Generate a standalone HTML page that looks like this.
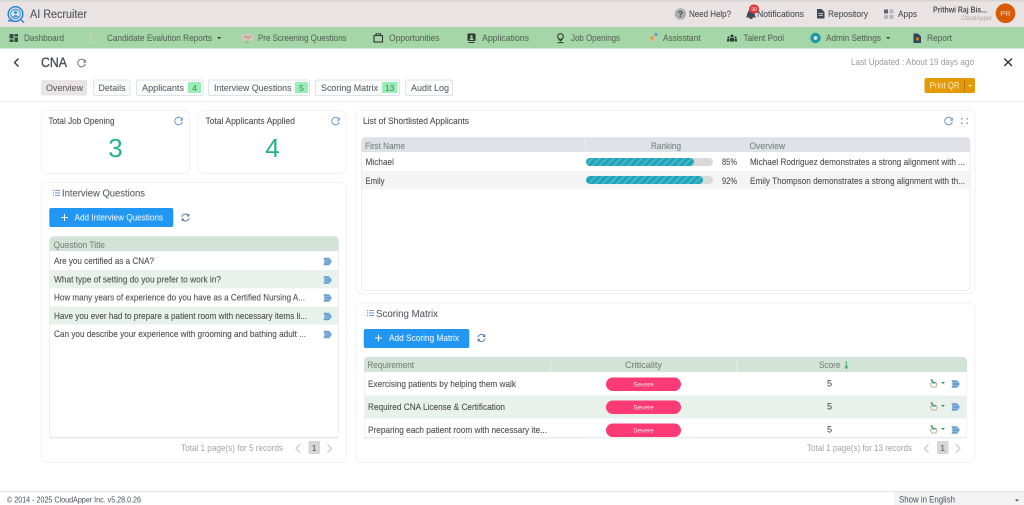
<!DOCTYPE html>
<html lang="en"><head><meta charset="utf-8"><title>AI Recruiter</title>
<style>
html,body{margin:0;padding:0;width:1024px;height:505px;overflow:hidden;background:#fff}
svg{display:block;filter:blur(.3px)}
text{font-family:"Liberation Sans",sans-serif;font-size:9px;fill:#555}
.nav{fill:#5a6a5d;font-size:9.2px;stroke:#5a6a5d;stroke-width:.1}
.top{fill:#4a5058;font-size:9.4px;stroke:#4a5058;stroke-width:.1}
.tab{fill:#5a5f66;font-size:9.4px;stroke:#5a5f66;stroke-width:.08}
.c{fill:#4f4f4f;font-size:9.1px;stroke:#4f4f4f;stroke-width:.1}
.h{fill:#7a827d;font-size:9.1px;stroke:#7a827d;stroke-width:.08}
.t{fill:#5a5f66;font-size:10.2px;stroke:#5a5f66;stroke-width:.1}
.w{fill:#e8f3ff;font-size:9.2px;stroke:#e8f3ff;stroke-width:.08}
.p{fill:#a3a3a3;font-size:9.2px}
</style></head><body>
<svg width="1024" height="505" viewBox="0 0 1024 505" xmlns="http://www.w3.org/2000/svg">
<defs>
<g id="rf"><path d="M3.6-1.4A3.8 3.8 0 1 0 3.8 .8" fill="none" stroke-width=".9"/><path d="M3.9-3.2V-.8H1.6" fill="none" stroke-width=".8"/></g>
<g id="sync" fill="none" stroke="#54799c" stroke-width=".9"><path d="M-3.6-.5A3.7 3.700 0 0 1 3-2"/><path d="M3.6 .5A3.7 3.700 0 0 1-3 2"/><path d="M3.4-3.6V-1.5H1.4M-3.4 3.6V1.500H-1.4"/></g>
<g id="go"><path d="M-4-3.800H1.500L4-.8V.8L1.500 3.800H-4L-3 0Z" fill="#6a9fd2"/><path d="M-3-1.300H2.200M-3 1.300H2.200" stroke="#a9c8e6" stroke-width=".7"/></g>
<g id="hand"><path d="M-1.500-4.500L0-1.200H2.600L3.400 .6 2.600 3.500H-1.600L-3.400 .4-2 -.2" fill="none" stroke="#c5b38e" stroke-width="1"/><path d="M-2.200-4.600L-.3-1.200H2.600L2 0H-1.200L-3-3.800Z" fill="#2f9e8a"/></g>
<g id="ls"><path d="M0-2.400H1M0 0H1M0 2.400H1" stroke="#5b94d8" stroke-width="1.100"/><path d="M2-2.400H7M2 0H7M2 2.400H7" stroke="#5b94d8" stroke-width=".9"/></g>
<g id="plus"><path d="M-3.500 0H3.500M0-3.500V3.500" stroke="#fff" stroke-width="1"/></g>
<pattern id="st" width="5" height="5" patternUnits="userSpaceOnUse" patternTransform="rotate(45)"><rect width="5" height="5" fill="#1fa3b8"/><rect width="2" height="5" fill="#48b6c8"/></pattern>
</defs>

<!-- top bar -->
<rect width="1024" height="1.500" fill="#d6d6d6"/>
<rect y="1.500" width="1024" height="25.500" fill="#e9e3e3"/>
<g fill="none" stroke="#1f7fd6">
<circle cx="15.500" cy="14" r="7.300" stroke-width="1.400"/>
<circle cx="15.500" cy="14" r="4.800" stroke-width=".9"/>
<path d="M21 20L24 22.500M8 20.800H13" stroke-width="1.300"/>
</g>
<circle cx="15.500" cy="12.400" r="1.700" fill="#2aa0e8"/><path d="M12.600 17.400a3 3 0 0 1 5.800 0Z" fill="#2aa0e8"/>
<text x="30" y="18" textLength="57" lengthAdjust="spacingAndGlyphs" style="font-size:11.500px;fill:#4f5661;stroke:#4f5661;stroke-width:.12">AI Recruiter</text>

<circle cx="680.500" cy="14" r="5.600" fill="#a9acb0"/><text x="680.500" y="17" text-anchor="middle" style="font-size:8.500px;font-weight:bold;fill:#3e4650">?</text>
<text class="top" x="689" y="17" textLength="42" lengthAdjust="spacingAndGlyphs">Need Help?</text>
<path d="M746 17.500C747.500 16 747 10 751 9.500 755 10 754.500 16 756 17.500Z" fill="#3f4a57"/><rect x="749.500" y="17.500" width="3" height="1.500" fill="#3f4a57"/>
<rect x="749" y="4.500" width="10" height="9" rx="4.500" fill="#e53535"/><text x="754" y="11" text-anchor="middle" style="font-size:5px;fill:#fff">90</text>
<text class="top" x="757" y="17" textLength="47" lengthAdjust="spacingAndGlyphs">Notifications</text>
<path d="M817 9H821.500L824.500 12V18.500H817Z" fill="#3f4a57"/><path d="M818.500 13.500H823M818.500 15.500H823" stroke="#e9e3e3" stroke-width=".7"/>
<text class="top" x="828" y="17" textLength="40" lengthAdjust="spacingAndGlyphs">Repository</text>
<rect x="884" y="9.500" width="4" height="4" fill="#5d6670"/><rect x="889.500" y="9.500" width="4" height="4" fill="#b3b7bb"/><rect x="884" y="15" width="4" height="4" fill="#b3b7bb"/><rect x="889.500" y="15" width="4" height="4" fill="#b3b7bb"/>
<text class="top" x="898" y="17" textLength="19" lengthAdjust="spacingAndGlyphs">Apps</text>
<text x="933" y="12.500" textLength="54" lengthAdjust="spacingAndGlyphs" style="font-size:8px;font-weight:bold;fill:#4a5058">Prithwi Raj Bis...</text>
<text x="961" y="20" textLength="31" lengthAdjust="spacingAndGlyphs" style="font-size:6.300px;fill:#a8a8a8">CloudApper</text>
<circle cx="1005.500" cy="13.300" r="9.800" fill="#d95a04"/><text x="1005.500" y="16" text-anchor="middle" style="font-size:7.500px;fill:#f3d9c6">PR</text>

<!-- nav -->
<rect y="27" width="1024" height="21.500" fill="#a5d6a7"/>
<g fill="#3c4a44"><rect x="9.500" y="34" width="4" height="4.500"/><rect x="9.500" y="39.500" width="4" height="2.500"/><rect x="14.500" y="34" width="3.500" height="2.500"/><rect x="14.500" y="37.500" width="3.500" height="4.500"/></g>
<text class="nav" x="24" y="41" textLength="40" lengthAdjust="spacingAndGlyphs">Dashboard</text>
<path d="M91 33V42.500H100" fill="none" stroke="#c4d6bc"/><path d="M92.500 41L95 38.500 97 40 99.500 34" fill="none" stroke="#c8c39c" stroke-width=".9"/>
<text class="nav" x="107" y="41" textLength="105" lengthAdjust="spacingAndGlyphs">Candidate Evalution Reports</text>
<path d="M217 37H221.400L219.200 39.200Z" fill="#3f4a44"/>
<rect x="242" y="34" width="11" height="6.500" fill="#d2c9bb"/><path d="M244 38L246 36 248 38.500 251 35.500" fill="none" stroke="#c46a5e" stroke-width=".7"/><path d="M247.500 40.500V42.500M245 42.500H250" stroke="#a6a59a" stroke-width=".7"/>
<text class="nav" x="258" y="41" textLength="88.500" lengthAdjust="spacingAndGlyphs">Pre Screening Questions</text>
<rect x="374" y="35.500" width="8.500" height="6.500" fill="none" stroke="#2e3a33" stroke-width="1.100"/><path d="M376 35.500V33.800H380.500V35.500" fill="none" stroke="#2e3a33"/>
<text class="nav" x="389" y="41" textLength="50.500" lengthAdjust="spacingAndGlyphs">Opportunities</text>
<rect x="467.500" y="33.500" width="8" height="7.500" rx="1" fill="#2e3a33"/><circle cx="471.500" cy="36.500" r="1.300" fill="#a5d6a7"/><path d="M469.500 40a2 2 0 0 1 4 0" fill="#a5d6a7"/><path d="M468.500 42.500H474.500" stroke="#2e3a33"/>
<text class="nav" x="482" y="41" textLength="47" lengthAdjust="spacingAndGlyphs">Applications</text>
<circle cx="560.500" cy="36.500" r="2.800" fill="none" stroke="#2e3a33" stroke-width="1.100"/><path d="M558.700 39L560.500 41 562.300 39M557.500 42.600H563.500" fill="none" stroke="#2e3a33"/>
<text class="nav" x="571" y="41" textLength="49" lengthAdjust="spacingAndGlyphs">Job Openings</text>
<rect x="649" y="35" width="7" height="7" fill="#c9c3b3"/><circle cx="652" cy="38" r="2" fill="#d6a94e"/><circle cx="656" cy="34.500" r="1.600" fill="#5ca0b8"/>
<text class="nav" x="663" y="41" textLength="37.500" lengthAdjust="spacingAndGlyphs">Assisstant</text>
<g fill="#2e3a33"><circle cx="732" cy="36" r="1.500"/><rect x="730" y="38" width="4" height="3.500"/><circle cx="728.500" cy="37.500" r="1.100"/><rect x="727" y="39" width="2.500" height="2.500"/><circle cx="735.500" cy="37.500" r="1.100"/><rect x="734.500" y="39" width="2.500" height="2.500"/></g>
<text class="nav" x="743.500" y="41" textLength="40.500" lengthAdjust="spacingAndGlyphs">Talent Pool</text>
<circle cx="815.500" cy="38" r="5.200" fill="#1c9aa6"/><circle cx="815.500" cy="38" r="1.800" fill="#e3f1f1"/>
<text class="nav" x="826" y="41" textLength="55" lengthAdjust="spacingAndGlyphs">Admin Settings</text>
<path d="M886 37H890.400L888.200 39.200Z" fill="#3f4a44"/>
<path d="M913.500 33.500H918L921 36.500V43H913.500Z" fill="#2d4662"/><rect x="916" y="37.500" width="3" height="3" fill="#d9772e"/>
<text class="nav" x="927" y="41" textLength="25" lengthAdjust="spacingAndGlyphs">Report</text>

<!-- header -->
<path d="M18.500 58.500L14.500 62.500 18.500 66.500" fill="none" stroke="#333" stroke-width="1.300"/>
<text x="41" y="67" textLength="26" lengthAdjust="spacingAndGlyphs" style="font-size:13.500px;fill:#4a4f57;stroke:#4a4f57;stroke-width:.35">CNA</text>
<use href="#rf" x="81.500" y="63" stroke="#666"/>
<text x="851" y="65" textLength="123" lengthAdjust="spacingAndGlyphs" style="font-size:9.200px;fill:#9a9a9a">Last Updated : About 19 days ago</text>
<path d="M1004.300 58.500L1012 66M1012 58.500L1004.300 66" stroke="#333" stroke-width="1.400"/>

<rect x="41" y="80" width="46" height="15.500" rx="1.500" fill="#e9e3e3"/>
<text class="tab" x="46" y="91" textLength="37" lengthAdjust="spacingAndGlyphs">Overview</text>
<g fill="#fbfcfc" stroke="#dce2e6" stroke-width=".9">
<rect x="93.500" y="80" width="36.500" height="15.500" rx="1.500"/>
<rect x="136.500" y="80" width="66.500" height="15.500" rx="1.500"/>
<rect x="208.500" y="80" width="101" height="15.500" rx="1.500"/>
<rect x="315.500" y="80" width="84" height="15.500" rx="1.500"/>
<rect x="405.500" y="80" width="47" height="15.500" rx="1.500"/>
</g>
<text class="tab" x="98.500" y="91" textLength="27" lengthAdjust="spacingAndGlyphs">Details</text>
<text class="tab" x="142" y="91" textLength="42" lengthAdjust="spacingAndGlyphs">Applicants</text>
<rect x="188" y="82" width="13" height="11" rx="1" fill="#98efb6"/><text x="194.500" y="91" text-anchor="middle" style="font-size:8.600px;fill:#4e7a5e">4</text>
<text class="tab" x="214" y="91" textLength="77.500" lengthAdjust="spacingAndGlyphs">Interview Questions</text>
<rect x="295" y="82" width="13" height="11" rx="1" fill="#98efb6"/><text x="301.500" y="91" text-anchor="middle" style="font-size:8.600px;fill:#4e7a5e">5</text>
<text class="tab" x="321" y="91" textLength="57" lengthAdjust="spacingAndGlyphs">Scoring Matrix</text>
<rect x="382" y="82" width="15.500" height="11" rx="1" fill="#98efb6"/><text x="389.700" y="91" text-anchor="middle" style="font-size:8.600px;fill:#4e7a5e">13</text>
<text class="tab" x="411" y="91" textLength="38" lengthAdjust="spacingAndGlyphs">Audit Log</text>

<rect x="924.500" y="78" width="50.500" height="15" rx="2" fill="#e59a05"/>
<text x="929.500" y="88.500" textLength="30" lengthAdjust="spacingAndGlyphs" style="font-size:9.200px;fill:#fbeccd">Print QR</text>
<rect x="964" y="79" width=".8" height="13" fill="#a9770e"/>
<path d="M968.200 85H971.800L970 86.800Z" fill="#fff"/>
<rect y="101" width="1024" height="1" fill="#e9e9e9"/>

<!-- cards -->
<g fill="#fff" stroke="#f1f1f1" stroke-width="1">
<rect x="41.500" y="110.500" width="148" height="63" rx="6"/>
<rect x="198" y="110.500" width="148" height="63" rx="6"/>
<rect x="41.500" y="182.500" width="305" height="280" rx="6"/>
<rect x="356" y="110.500" width="619" height="183" rx="6"/>
<rect x="356" y="303" width="619" height="159.500" rx="6"/>
</g>
<text class="c" x="48.500" y="124" textLength="66" lengthAdjust="spacingAndGlyphs">Total Job Opening</text>
<use href="#rf" x="178.500" y="121" stroke="#5b8fc0"/>
<text x="115.500" y="157" text-anchor="middle" style="font-size:26px;fill:#26b08c">3</text>
<text class="c" x="205.500" y="124" textLength="89.500" lengthAdjust="spacingAndGlyphs">Total Applicants Applied</text>
<use href="#rf" x="335.500" y="121" stroke="#5b8fc0"/>
<text x="272.500" y="157" text-anchor="middle" style="font-size:26px;fill:#26b08c">4</text>

<!-- interview questions -->
<use href="#ls" x="53" y="193"/>
<text class="t" x="62" y="196.500" textLength="83" lengthAdjust="spacingAndGlyphs">Interview Questions</text>
<rect x="49.300" y="208" width="124" height="19" rx="2" fill="#2196f3"/>
<use href="#plus" x="64.500" y="217.500"/>
<text class="w" x="74.500" y="220.500" textLength="88.500" lengthAdjust="spacingAndGlyphs">Add Interview Questions</text>
<use href="#sync" x="185.500" y="217.500"/>

<rect x="49.500" y="236.500" width="289" height="201" rx="4" fill="#fff" stroke="#ededed"/>
<path d="M49.500 251V241a4.500 4.500 0 0 1 4.500-4.500H334a4.500 4.500 0 0 1 4.500 4.500V251Z" fill="#d2e3d8"/>
<rect x="50" y="270" width="288" height="18.300" fill="#e8f1ec"/>
<rect x="50" y="306.300" width="288" height="18.300" fill="#e8f1ec"/>
<rect x="49.500" y="437" width="289" height="1.500" fill="#e8e8e8"/>
<text class="h" x="53.500" y="248" textLength="51.500" lengthAdjust="spacingAndGlyphs">Question Title</text>
<text class="c" x="54" y="264" textLength="100" lengthAdjust="spacingAndGlyphs">Are you certified as a CNA?</text>
<text class="c" x="54" y="282.500" textLength="167" lengthAdjust="spacingAndGlyphs">What type of setting do you prefer to work in?</text>
<text class="c" x="54" y="300.500" textLength="251" lengthAdjust="spacingAndGlyphs">How many years of experience do you have as a Certified Nursing A...</text>
<text class="c" x="54" y="319" textLength="253" lengthAdjust="spacingAndGlyphs">Have you ever had to prepare a patient room with necessary items li...</text>
<text class="c" x="54" y="337" textLength="252" lengthAdjust="spacingAndGlyphs">Can you describe your experience with grooming and bathing adult ...</text>
<use href="#go" x="327.500" y="261.500"/><use href="#go" x="327.500" y="280"/><use href="#go" x="327.500" y="298"/><use href="#go" x="327.500" y="316.500"/><use href="#go" x="327.500" y="334.500"/>
<text class="p" x="181" y="451" textLength="102" lengthAdjust="spacingAndGlyphs">Total 1 page(s) for 5 records</text>
<path d="M300 444.500L296 448.500 300 452.500" fill="none" stroke="#c0c0c0"/>
<rect x="308.500" y="441" width="11.500" height="13" rx="1" fill="#d6d6d6"/><text x="314.200" y="451" text-anchor="middle" style="font-size:8.600px;fill:#555">1</text>
<path d="M327.500 444.500L331.500 448.500 327.500 452.500" fill="none" stroke="#c0c0c0"/>

<!-- shortlist -->
<text class="c" x="363" y="124" textLength="106" lengthAdjust="spacingAndGlyphs">List of Shortlisted Applicants</text>
<use href="#rf" x="948.500" y="121" stroke="#5b8fc0"/>
<path d="M961.500 120V118.500H963M966 118.500H967.500V120M961.500 122V123.500H963M966 123.500H967.500V122" fill="none" stroke="#8fb2d4" stroke-width=".9"/>
<rect x="361.500" y="137.500" width="608.500" height="153" rx="4" fill="#fff" stroke="#eeeeee"/>
<path d="M361.500 152V141.500a4 4 0 0 1 4-4H966a4 4 0 0 1 4 4V152Z" fill="#dee1e5"/>
<rect x="585" y="137.500" width=".7" height="14.500" fill="#eceef0"/>
<rect x="362" y="171" width="607.500" height="18.300" fill="#f4f4f4"/>
<text class="h" x="365" y="149" textLength="40" lengthAdjust="spacingAndGlyphs">First Name</text>
<text class="h" x="651" y="149" textLength="30" lengthAdjust="spacingAndGlyphs">Ranking</text>
<text class="h" x="749.500" y="149" textLength="35.500" lengthAdjust="spacingAndGlyphs">Overview</text>
<text class="c" x="365.500" y="165" textLength="28.500" lengthAdjust="spacingAndGlyphs">Michael</text>
<text class="c" x="365.500" y="184" textLength="19" lengthAdjust="spacingAndGlyphs">Emily</text>
<rect x="586" y="158" width="127" height="8" rx="4" fill="#d9d9d9"/><rect x="586" y="158" width="108" height="8" rx="4" fill="url(#st)"/>
<rect x="586" y="176" width="127" height="8" rx="4" fill="#d9d9d9"/><rect x="586" y="176" width="117" height="8" rx="4" fill="url(#st)"/>
<text class="c" x="722" y="165" textLength="15" lengthAdjust="spacingAndGlyphs">85%</text>
<text class="c" x="722" y="184" textLength="15" lengthAdjust="spacingAndGlyphs">92%</text>
<text class="c" x="750" y="165" textLength="215" lengthAdjust="spacingAndGlyphs">Michael Rodriguez demonstrates a strong alignment with ...</text>
<text class="c" x="750" y="184" textLength="215" lengthAdjust="spacingAndGlyphs">Emily Thompson demonstrates a strong alignment with th...</text>

<!-- scoring -->
<use href="#ls" x="367" y="313"/>
<text class="t" x="376" y="317" textLength="62" lengthAdjust="spacingAndGlyphs">Scoring Matrix</text>
<rect x="363.800" y="329" width="105.500" height="19" rx="2" fill="#2196f3"/>
<use href="#plus" x="378.500" y="338"/>
<text class="w" x="389" y="341" textLength="70" lengthAdjust="spacingAndGlyphs">Add Scoring Matrix</text>
<use href="#sync" x="481.500" y="338"/>
<rect x="364" y="357" width="603" height="81" rx="4" fill="#fff"/>
<path d="M364 372V361a4 4 0 0 1 4-4H963a4 4 0 0 1 4 4V372Z" fill="#d2e3d8"/>
<rect x="550" y="357" width=".7" height="15" fill="#e6f0ea"/><rect x="736.500" y="357" width=".7" height="15" fill="#e6f0ea"/>
<rect x="364.500" y="395.500" width="602" height="23" fill="#e8f1ec"/>
<rect x="364" y="437" width="603" height="1.500" fill="#ececec"/>
<path d="M364.500 372V434a3 3 0 0 0 3 3M966.500 372V434a3 3 0 0 1-3 3" fill="none" stroke="#eeeeee" stroke-width=".8"/>
<text class="h" x="367.500" y="368" textLength="46.500" lengthAdjust="spacingAndGlyphs">Requirement</text>
<text class="h" x="625" y="368" textLength="37" lengthAdjust="spacingAndGlyphs">Criticality</text>
<text class="h" x="819" y="368" textLength="21.500" lengthAdjust="spacingAndGlyphs">Score</text>
<path d="M846.300 361V368M844.800 366L846.300 368.500 847.800 366" fill="none" stroke="#3fae64" stroke-width="1"/>
<text class="c" x="368" y="387" textLength="148" lengthAdjust="spacingAndGlyphs">Exercising patients by helping them walk</text>
<text class="c" x="368" y="410" textLength="137" lengthAdjust="spacingAndGlyphs">Required CNA License &amp; Certification</text>
<text class="c" x="368" y="433" textLength="179" lengthAdjust="spacingAndGlyphs">Preparing each patient room with necessary ite...</text>
<g fill="#fb3a76"><rect x="606" y="377.500" width="75" height="13.500" rx="6.700"/><rect x="606" y="400.500" width="75" height="13.500" rx="6.700"/><rect x="606" y="423.500" width="75" height="13.500" rx="6.700"/></g>
<text x="643.500" y="386.500" text-anchor="middle" style="font-size:6.500px;fill:#ffe3ec">Severe</text><text x="643.500" y="409.500" text-anchor="middle" style="font-size:6.500px;fill:#ffe3ec">Severe</text><text x="643.500" y="432.500" text-anchor="middle" style="font-size:6.500px;fill:#ffe3ec">Severe</text>
<text class="c" x="829.500" y="386.500" text-anchor="middle">5</text>
<text class="c" x="829.500" y="409.500" text-anchor="middle">5</text>
<text class="c" x="829.500" y="432.500" text-anchor="middle">5</text>
<use href="#hand" x="933.500" y="383.500"/><path d="M941 382H945L943 384Z" fill="#3f7f78"/><use href="#go" x="955.500" y="384"/>
<use href="#hand" x="933.500" y="406.500"/><path d="M941 405H945L943 407Z" fill="#3f7f78"/><use href="#go" x="955.500" y="407"/>
<use href="#hand" x="933.500" y="429.500"/><path d="M941 428H945L943 430Z" fill="#3f7f78"/><use href="#go" x="955.500" y="430"/>
<text class="p" x="807" y="451" textLength="105" lengthAdjust="spacingAndGlyphs">Total 1 page(s) for 13 records</text>
<path d="M928.500 444.500L924.500 448.500 928.500 452.500" fill="none" stroke="#c0c0c0"/>
<rect x="937" y="441" width="11.500" height="13" rx="1" fill="#d6d6d6"/><text x="942.700" y="451" text-anchor="middle" style="font-size:8.600px;fill:#555">1</text>
<path d="M956 444.500L960 448.500 956 452.500" fill="none" stroke="#c0c0c0"/>

<!-- footer -->
<rect y="491" width="1024" height="1" fill="#e2e2e2"/>
<text x="7" y="502.500" textLength="134" lengthAdjust="spacingAndGlyphs" style="font-size:8px;fill:#4a4f5a">© 2014 - 2025 CloudApper Inc. v5.28.0.26</text>
<rect x="894" y="492" width="130" height="13" fill="#f3f3f3"/>
<text x="899" y="502.500" textLength="56" lengthAdjust="spacingAndGlyphs" style="font-size:9px;fill:#4a4f5a">Show in English</text>
<path d="M1015 499.500H1019L1017 501.500Z" fill="#444"/>
</svg>
</body></html>
